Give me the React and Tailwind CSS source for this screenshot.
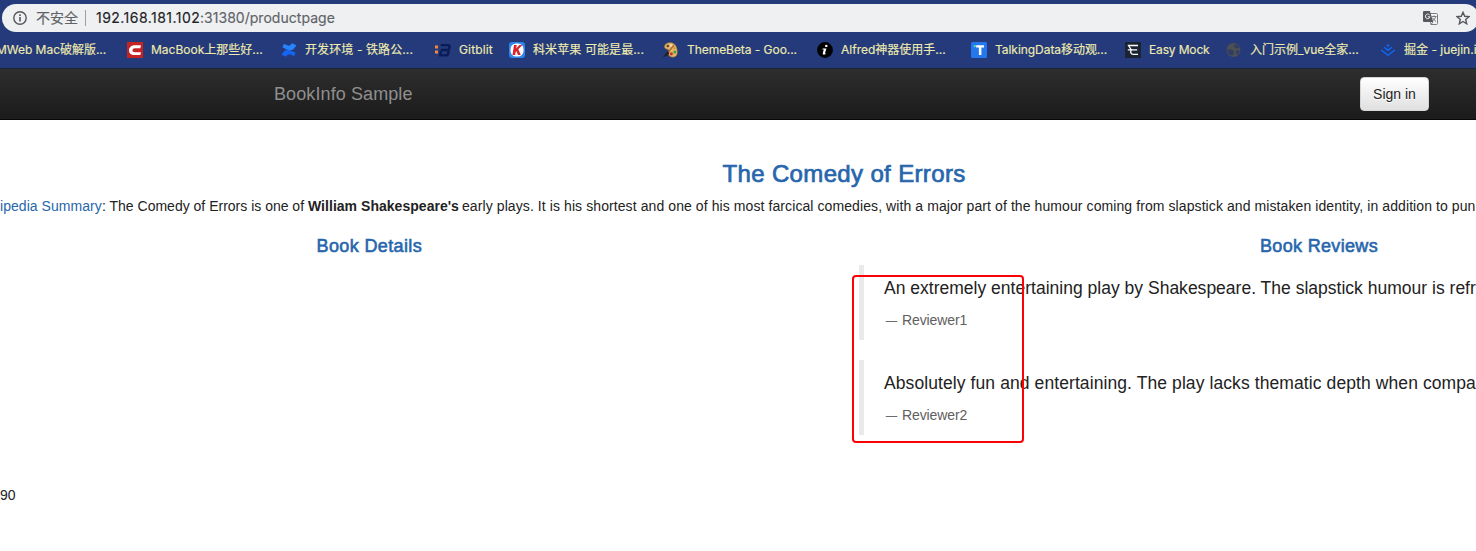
const MacBookIcon = () => (
  <svg className="h-4 w-4" viewBox="0 0 16 16">
    <rect width="16" height="16" fill="#c32423" />
    <path d="M14 3.300H7.500C4.400 3.300 2 5.500 2 8.400c0 2.800 2 4.600 5 4.600h6.300l.7-2.800H7.700c-1.400 0-2.200-.6-2.200-1.700C5.500 7.100 6.400 6.200 8 6.200h5.300z" fill="#fff" />
  </svg>
);
const ConfluenceIcon = () => (
  <svg className="h-4 w-4" viewBox="0 0 16 16">
    <path d="M1.400 5.200 3 1.800C6.800 3.600 8.200 5.200 11 1.300L15.400 3.300C11.200 11 7.500 8.300 1.400 5.200z" fill="#2684ff" />
    <path d="M14.600 10.800 13 14.200C9.200 12.400 7.800 10.800 5 14.700L.6 12.700C4.800 5 8.500 7.700 14.600 10.800z" fill="#1664f2" />
  </svg>
);
const GitblitIcon = () => (
  <svg className="h-4 w-4" viewBox="0 0 16 16">
    <path d="M0 3.500h3v3H0zM0 8.500h3v3H0z" fill="#f5873a" />
    <path d="M5.800 3.200H13c1.300 0 1.800.8 1.500 2l-.3 1.300c-.2.9-.9 1.400-1.700 1.400.8 0 1.300.6 1.100 1.500l-.5 2.300c-.2 1.100-1 1.700-2.100 1.700H5.200l.6-4.400M5.800 8H13" fill="none" stroke="#0a1b58" strokeWidth="2.300" />
  </svg>
);
const KIcon = () => (
  <svg className="h-4 w-4" viewBox="0 0 16 16">
    <rect width="16" height="16" rx="3" fill="#2a86ea" />
    <rect x="1.500" y="1.500" width="13" height="13" rx="5.500" fill="#fff" />
    <path d="M5 3h2.700L7.200 6.600 10.400 3h3L9.300 7.300l2.500 5.700H9L7.400 9.200l-.8.8-.4 3H3.500z" fill="#d8232a" />
  </svg>
);
const PaletteIcon = () => (
  <svg className="h-4 w-4" viewBox="0 0 16 16">
    <path d="M4 1.200C7.500-.5 12 1 13.500 5c1.500 4.500 1.400 8.500-1.500 9.800-3 1.200-6.500-.3-6.600-2.800 0-1.700 1.400-2.500.6-3.700C5.200 7 2.200 7.400 1.500 5.400 1 3.600 2.200 2 4 1.200z" fill="#e0b56c" stroke="#7e5c32" strokeWidth=".6" />
    <circle cx="4.800" cy="4" r="1.300" fill="#6f3c24" />
    <circle cx="8.400" cy="3.500" r="1.200" fill="#f5e8bb" />
    <circle cx="11.300" cy="6" r="1.200" fill="#e79432" />
    <circle cx="8.300" cy="11.800" r="1.600" fill="#d92e24" />
    <circle cx="11.800" cy="10" r="1.500" fill="#38a83c" />
    <path d="M11 3 4.500 11" stroke="#a9692c" strokeWidth="1.200" />
    <path d="M4.800 9.300 6.300 11c-1 2.500-3.300 3.800-6.300 3.900C1.500 13 3 10.300 4.800 9.300z" fill="#20232b" />
  </svg>
);
const InfoBlackIcon = () => (
  <svg className="h-4 w-4" viewBox="0 0 16 16">
    <circle cx="8" cy="8" r="7.900" fill="#000" />
    <circle cx="9.300" cy="3.900" r="1.200" fill="#fff" />
    <path d="M5.700 6.500h3.700L8 11.300c-.1.600.5.500 1.300-.2-.6 1.800-4 2.700-3.500 0l1-3.700H5.300z" fill="#fff" />
  </svg>
);
const TalkingIcon = () => (
  <svg className="h-4 w-4" viewBox="0 0 16 16">
    <rect width="16" height="16" rx="1.500" fill="#2577ee" />
    <path d="M5.200 3.200H13v2.300h-2.600V13H7.900V5.500H5.200z" fill="#fff" />
    <path d="M2.800 3.200h1.900v1.900H2.800z" fill="#53e6a0" />
  </svg>
);
const EasyMockIcon = () => (
  <svg className="h-4 w-4" viewBox="0 0 16 16">
    <rect width="16" height="16" fill="#1a2431" />
    <path d="M2.800 3.500H13M3.500 3.500 6.300 7.800H12.200M2.800 7.800h3.500M6.300 7.800c-1.200 2.600-.5 4.500 2 4.500H13" fill="none" stroke="#fff" strokeWidth="1.300" />
  </svg>
);
const GlobeIcon = () => (
  <svg className="h-4 w-4" viewBox="0 0 16 16">
    <circle cx="7.500" cy="8" r="7" fill="#4c4f53" />
    <path d="M9 2.500c2 0 3.800 1.300 4.500 3.300l-2.700.7L9.300 5.200 7.500 5.500zM1.500 7.500l3.300.2 2.300.8.900 1.600-1.500 3.300C3.500 13.500 1.500 10.800 1.500 7.500zM10 8.700l3.500-.2c0 1.800-1 3.500-2.600 4.400z" fill="#2f3c63" />
  </svg>
);
const JuejinIcon = () => (
  <svg className="h-4 w-4" viewBox="0 0 16 16">
    <path d="m8 2.200 1.700 1.300L8 4.900 6.300 3.500z" fill="#0f6bff" />
    <path d="M4.200 5.300 8 8.300l3.800-3M1.200 7.900 8 13.200l6.800-5.300" fill="none" stroke="#0f6bff" strokeWidth="1.300" />
  </svg>
);

const bookmarks = [
  { Icon: MacBookIcon, label: "MacBook上那些好...", box: "w-[154px]", track: "" },
  { Icon: ConfluenceIcon, label: "开发环境 - 铁路公...", box: "w-[154px]", track: "tracking-[0.1px]" },
  { Icon: GitblitIcon, label: "Gitblit", box: "w-[74px]", track: "tracking-[0.15px]" },
  { Icon: KIcon, label: "科米苹果 可能是最...", box: "w-[154px]", track: "tracking-[0.1px]" },
  { Icon: PaletteIcon, label: "ThemeBeta - Goo...", box: "w-[154px]", track: "tracking-[-0.05px]" },
  { Icon: InfoBlackIcon, label: "Alfred神器使用手...", box: "w-[154px]", track: "" },
  { Icon: TalkingIcon, label: "TalkingData移动观...", box: "w-[154px]", track: "tracking-[-0.05px]" },
  { Icon: EasyMockIcon, label: "Easy Mock", box: "w-[101px]", track: "tracking-[-0.15px]" },
  { Icon: GlobeIcon, label: "入门示例_vue全家...", box: "w-[154px]", track: "" },
  { Icon: JuejinIcon, label: "掘金 - juejin.i", box: "w-[154px]", track: "" },
];

function AddressBar() {
  return (
    <div className="ml-0.5 flex h-7 w-[1477px] shrink-0 items-center rounded-full bg-[#eff0f2] text-[14px] leading-7 whitespace-nowrap text-[#5f6368] [-webkit-text-stroke:0.15px_currentColor]">
      <svg className="ml-[11px] h-[14px] w-[14px]" viewBox="0 0 14 14">
        <circle cx="7" cy="7" r="6.200" fill="none" stroke="#54575b" strokeWidth="1.400" />
        <path d="M6.200 3.300h1.600v1.600H6.200zM6.200 6h1.600v4.600H6.200z" fill="#54575b" />
      </svg>
      <span className="ml-[9px] w-[42px]">不安全</span>
      <span className="ml-[7px] h-4 w-px bg-[#9a9da1]" />
      <span className="ml-[10px] w-[104px] tracking-[0.47px] text-[#202124]">192.168.181.102</span>
      <span className="tracking-[0.03px]">:31380/productpage</span>
      <svg className="mr-[18px] ml-auto h-[14px] w-[15px]" viewBox="0 0 15 14">
        <path d="M6 2.500h7.500a1 1 0 0 1 1 1v9a1 1 0 0 1-1 1H8z" fill="#f3f3f4" stroke="#7c7f82" strokeWidth="1" />
        <path d="M1 0h5.800l3.500 11H1a1 1 0 0 1-1-1V1a1 1 0 0 1 1-1z" fill="#55585c" />
        <path d="M6.500 3.900A2.300 2.300 0 1 0 7 5.800H4.800" fill="none" stroke="#eff0f2" strokeWidth="1" />
        <path d="M8.700 5.500h5M11.200 4.500v1M12.600 5.500c-.4 2-1.600 3.500-3 4.500M9.700 6.700c.6 1.500 1.900 2.800 3.400 3.800M8 13.500l2-2.500" fill="none" stroke="#6f7276" strokeWidth=".9" />
      </svg>
      <svg className="mr-[9px] h-[14px] w-[14px]" viewBox="0 0 14 14">
        <path d="m7 1.300 1.700 4 4.300.4-3.300 2.800 1 4.300L7 10.500l-3.700 2.300 1-4.300L1 5.700l4.300-.4z" fill="none" stroke="#55585c" strokeWidth="1.400" />
      </svg>
    </div>
  );
}

function Review({ text, author, track }) {
  return (
    <blockquote className="mb-5 border-l-[5px] border-[#eaeaea] py-2.5 pl-5">
      <p className={"mb-[9px] pt-px text-[17.5px] leading-[25px] " + track}>{text}</p>
      <small className="flex h-5 items-center pl-0.5 text-[14px] leading-5 text-[#606060]">
        <span className="w-4 text-[11px] [-webkit-text-stroke:0.4px_#606060]">—</span>
        <span className="tracking-[-0.1px]">{author}</span>
      </small>
    </blockquote>
  );
}

export default function App() {
  return (
    <div className="relative h-[551px] w-[1476px] overflow-hidden bg-white font-['Liberation_Sans',sans-serif] text-[#222]">
      <header className="flex h-[68px] flex-col bg-[#243a7a] pt-1 font-[Inter,'Noto_Sans_CJK_SC',sans-serif]">
        <AddressBar />
        <div className="flex h-9 items-center text-[12px] whitespace-nowrap text-[#efebae] [-webkit-text-stroke:0.15px_#efebae]">
          <span className="-ml-[4px] w-[131px] shrink-0 tracking-[-0.03px]">MWeb Mac破解版...</span>
          {bookmarks.map(({ Icon, label, box, track }) => (
            <div key={label} className={"flex shrink-0 items-center gap-2 " + box}>
              <Icon />
              <span className={track}>{label}</span>
            </div>
          ))}
        </div>
      </header>

      <nav className="flex h-[52px] items-center border-t border-b border-t-[#1e2438] border-b-[#080808] bg-linear-to-b from-[#2e2e2e] to-[#1b1b1b] pr-[47px] pl-[274px]">
        <span className="text-[18px] tracking-[0.1px] text-[#8f8f8f]">BookInfo Sample</span>
        <button className="ml-auto h-[34px] w-[69px] rounded-[4px] border border-[#d5d5d5] bg-linear-to-b from-white to-[#e0e0e0] text-[14px] text-[#222] [text-shadow:0_1px_0_#fff]">
          Sign in
        </button>
      </nav>

      <main className="whitespace-nowrap">
        <h3 className="mt-10 pl-[722.500px] text-[24px] leading-[27px] tracking-[0.35px] text-[#2766ac] [-webkit-text-stroke:0.7px_#2766ac]">
          The Comedy of Errors
        </h3>
        <p className="mt-[9px] flex text-[14px] leading-5 whitespace-pre">
          <a className="w-[102px] shrink-0 tracking-[0.05px] text-[#2766ac]">ipedia Summary</a>
          <span className="w-[206px] shrink-0">: The Comedy of Errors is one of </span>
          <b className="w-[154px] shrink-0 tracking-[0.03px]">William Shakespeare's</b>
          <span className="shrink-0 tracking-[0.088px]">
            early plays. It is his shortest and one of his most farcical comedies, with a major part of the humour coming from slapstick and mistaken identity, in addition to pun
          </span>
        </p>
        <div className="mt-5 flex">
          <section className="w-[859px] shrink-0">
            <h4 className="pl-[316.500px] text-[18px] leading-5 tracking-[0.38px] text-[#2766ac] [-webkit-text-stroke:0.6px_#2766ac]">
              Book Details
            </h4>
          </section>
          <section className="w-[900px] shrink-0">
            <h4 className="mb-[9px] pl-[401px] text-[18px] leading-5 tracking-[0.33px] text-[#2766ac] [-webkit-text-stroke:0.6px_#2766ac]">
              Book Reviews
            </h4>
            <Review text="An extremely entertaining play by Shakespeare. The slapstick humour is refr" author="Reviewer1" track="tracking-[0.01px]" />
            <Review text="Absolutely fun and entertaining. The play lacks thematic depth when compa" author="Reviewer2" track="tracking-[0.09px]" />
          </section>
        </div>
        <p className="mt-[30px] text-[14px] leading-5">90</p>
      </main>

      <div className="absolute top-[275px] left-[852px] h-[168px] w-[172px] rounded-[4px] border-2 border-[#fb0207]" />
    </div>
  );
}
